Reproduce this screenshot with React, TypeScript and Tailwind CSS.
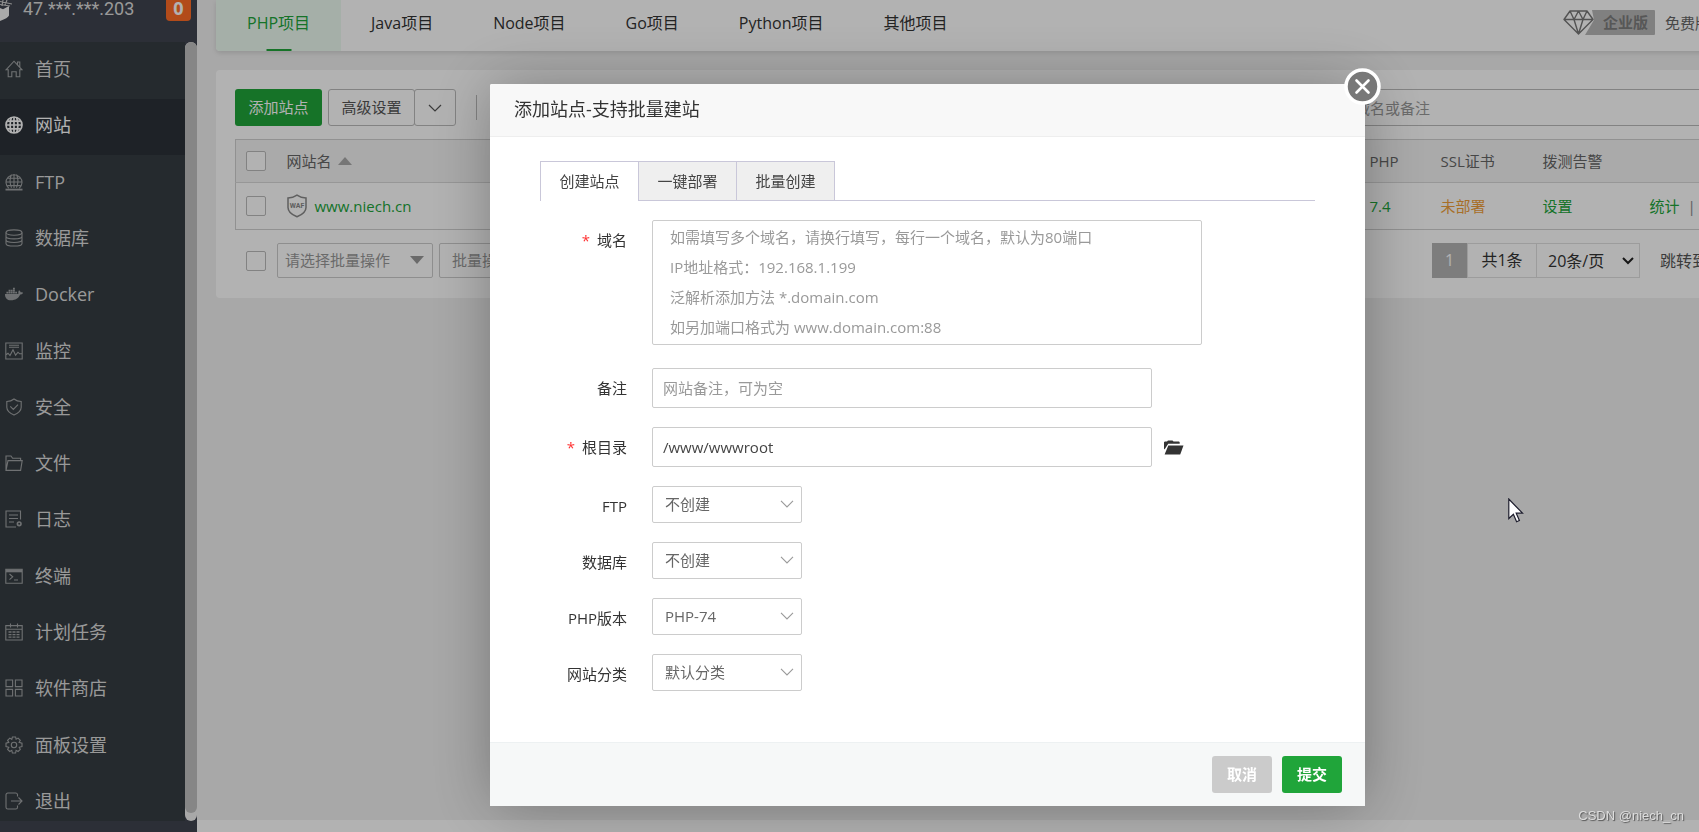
import React, { useState } from 'react'
import { FaDocker } from 'react-icons/fa'

const svgProps = {
  viewBox: '0 0 18 18',
  fill: 'none',
  stroke: 'currentColor',
  strokeWidth: 1.1,
  className: 'size-[18px] shrink-0',
  'aria-hidden': true,
}

const menuItems: { name: string; icon: React.ReactNode }[] = [
  {
    name: '首页',
    icon: (
      <svg {...svgProps}>
        <path d="M1 9.8 9 1.2l8 8.6h-2.2v7h-3.6v-5H6.8v5H3.2v-7zM12.5 4.8V2h2.3v5.2" />
      </svg>
    ),
  },
  {
    name: '网站',
    icon: (
      <svg {...svgProps} strokeWidth={1.7}>
        <circle cx="9" cy="9" r="8" />
        <path d="M9 1v16M1 9h16M2.3 5.2h13.4M2.3 12.8h13.4M6.4 1.5c-1.6 4.6-1.6 10.4 0 15M11.6 1.5c1.6 4.6 1.6 10.4 0 15" />
      </svg>
    ),
  },
  {
    name: 'FTP',
    icon: (
      <svg {...svgProps}>
        <path d="M3.8 15.2a8 7.6 0 1 1 10.4 0M9 1v14M1 9h16M2.4 5.2h13.2M2.4 12.6h13.2M6.5 1.6c-1.8 4-1.8 9 0 13.2M11.5 1.6c1.8 4 1.8 9 0 13.2" />
        <path d="M.5 16.6h17" strokeWidth="1.8" />
      </svg>
    ),
  },
  {
    name: '数据库',
    icon: (
      <svg {...svgProps}>
        <ellipse cx="9" cy="3.6" rx="8" ry="2.7" />
        <path d="M1 3.6v10.8c0 3.5 16 3.5 16 0V3.6M1 7.2c0 3.5 16 3.5 16 0M1 10.8c0 3.5 16 3.5 16 0" />
      </svg>
    ),
  },
  { name: 'Docker', icon: <FaDocker className="size-[18px] shrink-0" aria-hidden /> },
  {
    name: '监控',
    icon: (
      <svg {...svgProps}>
        <path d="M.8 1h16.4v16H.8zM4 3.2h10M4 5.3h10M1 12.8l2-1.6 2 2.3 3-5.7 2.6 5.4 2.4-3 1.6 1.6H17" />
      </svg>
    ),
  },
  {
    name: '安全',
    icon: (
      <svg {...svgProps}>
        <path d="M9 1c2 1.6 4.3 2.4 7.2 2.5v5.8c0 3.4-3.4 6.1-7.2 7.8-3.8-1.7-7.2-4.4-7.2-7.8V3.5C4.7 3.4 7 2.6 9 1zM5.3 8.4 8.3 11.4 13 6.6" />
      </svg>
    ),
  },
  {
    name: '文件',
    icon: (
      <svg {...svgProps}>
        <path d="M1 16.4V2h5l1.6 2.2h8V6.4M1 16.4 3 6.6h14.2l-1.6 9.8z" />
      </svg>
    ),
  },
  {
    name: '日志',
    icon: (
      <svg {...svgProps}>
        <path d="M11 17H1V1h14.5v8.5M4 5h9M4 8.5h9M4 12h5" />
        <circle cx="14.2" cy="13.8" r="1.8" strokeWidth="1.6" />
      </svg>
    ),
  },
  {
    name: '终端',
    icon: (
      <svg {...svgProps}>
        <path d="M.8 2.2h16.4v14H.8zM4.5 7l3.2 2.8-3.2 2.8M9 13h4" />
        <path d="M1 3.8h16" strokeWidth="3" />
      </svg>
    ),
  },
  {
    name: '计划任务',
    icon: (
      <svg {...svgProps}>
        <path d="M.8 2.6h16.4V17H.8zM.8 6.3h16.4M5.5.6v3.8M12.5.6v3.8" />
        <path d="M3.5 9h11M3.5 11.6h11M3.5 14.2h11" strokeDasharray="3 1" strokeWidth="1.3" />
      </svg>
    ),
  },
  {
    name: '软件商店',
    icon: (
      <svg {...svgProps}>
        <path d="M1 1h6.6v6.6H1zM10.4 1H17v6.6h-6.6zM1 10.4h6.6V17H1zM10.4 10.4H17V17h-6.6z" />
      </svg>
    ),
  },
  {
    name: '面板设置',
    icon: (
      <svg {...svgProps}>
        <path d="M7.4 1h3.2l.5 2.2 2-1.1 2.2 2.2-1.2 2 2.9.8v3.4l-2.8.8 1.1 2-2.2 2.2-2-1.2-.5 2.7H7.4l-.6-2.7-2 1.2-2.2-2.2 1.2-2L1 10.600V7.200l2.800-.8-1.200-2.100 2.200-2.200 2 1.200z" />
        <circle cx="9" cy="9" r="2.7" />
      </svg>
    ),
  },
  {
    name: '退出',
    icon: (
      <svg {...svgProps}>
        <path d="M12.5 4.5V2.8A1.8 1.8 0 0 0 10.7 1H2.8A1.8 1.8 0 0 0 1 2.8v12.4A1.8 1.8 0 0 0 2.8 17h7.9a1.8 1.8 0 0 0 1.8-1.8v-1.7M6 9h11M13.5 5.5 17 9l-3.5 3.5" />
      </svg>
    ),
  },
]

const projectTabs = ['PHP项目', 'Java项目', 'Node项目', 'Go项目', 'Python项目', '其他项目']

const domainHint = [
  '如需填写多个域名，请换行填写，每行一个域名，默认为80端口',
  'IP地址格式：192.168.1.199',
  '泛解析添加方法 *.domain.com',
  '如另加端口格式为 www.domain.com:88',
].join('\n')

function Sidebar() {
  return (
    <aside className="flex w-[197px] shrink-0 flex-col bg-[#40444f]">
      <div className="flex h-[42px] shrink-0 items-start">
        <svg viewBox="0 0 12 22" className="h-[22px] w-3 shrink-0" aria-hidden="true">
          <path d="M0 8 3 9.200 9 6v9.500Q8 18 0 21z" fill="#f4f4f4" />
          <path d="M0 1.500 12 4M0 4.500l10 1.500M3 0 2 6M7 0 5 5" stroke="#ccc" strokeWidth="1.2" fill="none" />
        </svg>
        <span className="ml-[11px] font-[Roboto,sans-serif] text-lg leading-[18px] text-[#dcdcdc]">
          47.***.***.203
        </span>
        <span className="mr-[6px] ml-auto h-[21px] w-[25px] rounded-b bg-[#ff6c26] text-center text-lg leading-4 font-bold text-white">
          0
        </span>
      </div>
      <div className="flex min-h-0 flex-1">
        <nav className="flex-1 overflow-hidden bg-[#363d42]">
          <ul className="grid h-[788px] grid-rows-[repeat(14,1fr)]">
            {menuItems.map((item) => {
              const active = item.name === '网站'
              return (
                <li
                  key={item.name}
                  className={active ? 'mt-px bg-[#2c3238] text-white' : 'mt-px text-[#a0a3a5]'}
                >
                  <a href="#" className="flex h-full items-center gap-3 pb-[3px] pl-[5px]">
                    {item.icon}
                    <span className={active ? 'text-lg text-white' : 'text-lg text-[#dcdcdc]'}>
                      {item.name}
                    </span>
                  </a>
                </li>
              )
            })}
          </ul>
        </nav>
        <div className="w-3 rounded-full bg-[#f1f1f1] pb-2">
          <div className="h-full rounded-full bg-[#c0c0c0]" />
        </div>
      </div>
      <div className="h-[11px] shrink-0" />
    </aside>
  )
}

function Checkbox({ label }: { label: string }) {
  return (
    <input
      type="checkbox"
      aria-label={label}
      className="block size-5 shrink-0 appearance-none rounded-xs border border-[#bbb] bg-white"
    />
  )
}

function ProjectNav() {
  return (
    <nav className="flex h-[51px] shrink-0 items-stretch rounded-b bg-white text-base text-[#333] shadow-[0_2px_5px_rgba(0,0,0,0.12)]">
      {projectTabs.map((tab, i) =>
        i === 0 ? (
          <button
            key={tab}
            className="relative rounded-bl bg-[#edfbf1] px-[31px] pb-[6px] text-[#20a53a]"
          >
            {tab}
            <span className="absolute bottom-0 left-1/2 h-[2px] w-[25px] -translate-x-1/2 bg-[#20a53a]" />
          </button>
        ) : (
          <button key={tab} className="px-[30px] pb-[6px]">
            {tab}
          </button>
        )
      )}
      <div className="mr-[29px] ml-auto flex items-start pt-[10px] text-[15px]">
        <svg viewBox="0 0 94 26" className="h-[26px] w-[94px]" aria-hidden="true">
          <path d="M29 0h62a1 1 0 0 1 1 1v23a1 1 0 0 1-1 1H22l9-15z" fill="#b8b8b8" />
          <path
            d="M7 1h17l6 8.5L15.5 24 1 9.5zM1 9.5h29M7 1l4 8.5L15.5 24 20 9.5 24 1M11 9.5 15.5 1 20 9.5"
            fill="none"
            stroke="#777"
            strokeWidth="1.4"
            strokeLinejoin="round"
          />
        </svg>
        <span className="-ml-[54px] w-[54px] leading-[25px] font-bold text-[#7d7d7d]">企业版</span>
        <span className="ml-2 leading-[26px] text-[#666]">免费版</span>
      </div>
    </nav>
  )
}

function SitePanel() {
  return (
    <section className="mt-[19px] rounded bg-white px-[19px] pt-[19px] pb-5 text-[15px] text-[#666]">
      <div className="flex items-center">
        <button className="h-[37px] w-[87px] rounded-[3px] bg-[#20a53a] text-white">添加站点</button>
        <button className="ml-[6px] h-[37px] w-[87px] rounded-[3px] border border-[#bbb] text-[#555]">
          高级设置
        </button>
        <button
          aria-label="更多"
          className="-ml-px flex h-[37px] w-[42px] items-center justify-center rounded-[3px] border border-[#bbb]"
        >
          <svg viewBox="0 0 14 8" className="h-2 w-3.5" fill="none" stroke="#555" aria-hidden="true">
            <path d="m1 1 6 6 6-6" strokeWidth="1.2" />
          </svg>
        </button>
        <span className="ml-5 h-[25px] w-px bg-[#bbb]" />
        <input
          type="text"
          aria-label="搜索"
          placeholder="请输入域名或备注"
          className="ml-auto h-[37px] w-[421px] rounded-[3px] border border-[#bbb] px-[10px] placeholder:text-[#999]"
        />
      </div>

      <table className="mt-[13px] w-full table-fixed border-collapse border border-[#d0d0d0] text-left">
        <thead>
          <tr className="h-[43px] border-b border-[#d8d8d8] bg-[#f4f4f4] *:font-normal">
            <th className="w-[51px] pl-[10px]">
              <Checkbox label="全选" />
            </th>
            <th>
              <span className="flex items-center gap-[6px]">
                网站名
                <svg viewBox="0 0 14 8" className="h-2 w-3.5" fill="#aaa" aria-hidden="true">
                  <path d="M0 8 7 0l7 8z" />
                </svg>
              </span>
            </th>
            <th className="w-[71px] pl-[10px]">PHP</th>
            <th className="w-[102px] pl-[10px]">SSL证书</th>
            <th className="w-[107px] pl-[10px]">拨测告警</th>
            <th className="w-20 pl-[10px]" />
          </tr>
        </thead>
        <tbody>
          <tr className="h-[47px] text-[#20a53a]">
            <td className="pl-[10px]">
              <Checkbox label="选择 www.niech.cn" />
            </td>
            <td>
              <span className="flex items-center gap-2">
                <svg viewBox="0 0 20 24" className="h-6 w-5" aria-hidden="true">
                  <path
                    d="M10 1.2c2.5 1.8 5.5 2.7 9 2.8v9.5c0 4.5-4.5 7.5-9 9.3-4.5-1.8-9-4.8-9-9.3V4c3.5-.1 6.5-1 9-2.8z"
                    fill="none"
                    stroke="#888"
                    strokeWidth="1.5"
                  />
                  <text
                    x="10"
                    y="13.5"
                    textAnchor="middle"
                    fontSize="7"
                    fontWeight="700"
                    fontFamily="Roboto, sans-serif"
                    fill="#888"
                  >
                    WAF
                  </text>
                </svg>
                <a href="#">www.niech.cn</a>
              </span>
            </td>
            <td className="pl-[10px]">
              <a href="#">7.4</a>
            </td>
            <td className="pl-[10px]">
              <a href="#" className="text-[#f0a03a]">
                未部署
              </a>
            </td>
            <td className="pl-[10px]">
              <a href="#">设置</a>
            </td>
            <td className="pl-[10px] whitespace-nowrap">
              <a href="#">统计</a>
              <span className="ml-2 text-[#888]">|</span>
            </td>
          </tr>
        </tbody>
      </table>

      <div className="mt-[13px] flex h-[35px] items-center pl-[11px]">
        <Checkbox label="选择全部站点" />
        <div className="relative ml-[11px]">
          <select
            aria-label="批量操作"
            className="h-[35px] w-[156px] appearance-none rounded-xs border border-[#ccc] bg-white px-[7px] text-[#999]"
          >
            <option>请选择批量操作</option>
          </select>
          <svg
            viewBox="0 0 14 8"
            className="pointer-events-none absolute top-[13px] right-[9px] h-2 w-3.5"
            fill="#999"
            aria-hidden="true"
          >
            <path d="M0 0h14L7 8z" />
          </svg>
        </div>
        <button className="ml-[6px] h-[35px] rounded-xs border border-[#ccc] px-3 text-[#999]">
          批量操作
        </button>
        <div className="ml-auto flex w-[288px] items-center text-base whitespace-nowrap text-[#333]">
          <span className="w-[35px] bg-[#b4b4b4] text-center leading-[35px] text-white">1</span>
          <span className="w-[70px] border border-[#e0e0e0] text-center leading-[33px]">共1条</span>
          <div className="relative -ml-px">
            <select
              aria-label="每页条数"
              className="h-[35px] w-[104px] appearance-none border border-[#e0e0e0] bg-white pl-[11px] text-base"
            >
              <option>20条/页</option>
            </select>
            <svg
              viewBox="0 0 12 8"
              className="pointer-events-none absolute top-[14px] right-[6px] h-2 w-3"
              fill="none"
              stroke="#222"
              aria-hidden="true"
            >
              <path d="m1 1 5 5 5-5" strokeWidth="2" />
            </svg>
          </div>
          <span className="ml-5 text-[#555]">跳转到</span>
        </div>
      </div>
    </section>
  )
}

function FormRow({
  id,
  label,
  required,
  children,
}: {
  id: string
  label: string
  required?: boolean
  children: React.ReactNode
}) {
  return (
    <div className="flex items-start">
      <label htmlFor={id} className="w-[137px] shrink-0 text-right leading-10 text-[#333]">
        {required && <span className="mr-[7px] text-[#f33]">*</span>}
        {label}
      </label>
      <div className="ml-[25px] flex min-w-0 items-center">{children}</div>
    </div>
  )
}

function SelectField({ id, value }: { id: string; value: string }) {
  return (
    <div className="relative">
      <select
        id={id}
        className="block h-[37px] w-[150px] appearance-none rounded-xs border border-[#ccc] bg-white pl-3 text-[#666]"
      >
        <option>{value}</option>
      </select>
      <svg
        viewBox="0 0 14 8"
        className="pointer-events-none absolute top-[14px] right-2 h-2 w-3.5"
        fill="none"
        stroke="#999"
        aria-hidden="true"
      >
        <path d="m1 .8 6 6.2 6-6.2" strokeWidth="1.1" />
      </svg>
    </div>
  )
}

function AddSiteDialog() {
  const [tab, setTab] = useState('创建站点')
  const [root, setRoot] = useState('/www/wwwroot')

  return (
    <div
      role="dialog"
      aria-label="添加站点"
      className="relative w-[875px] rounded-xs bg-white text-[15px] shadow-[1px_1px_62px_rgba(0,0,0,0.3)]"
    >
      <h2 className="h-[53px] rounded-t-xs border-b border-[#eee] bg-[#f8f8f8] pl-6 text-lg leading-[51px] text-[#333]">
        添加站点-支持批量建站
      </h2>
      <button aria-label="关闭" className="absolute -top-4 -right-4 size-[37px]">
        <svg viewBox="0 0 37 37" fill="none" stroke="#fff" aria-hidden="true">
          <circle cx="18.5" cy="18.5" r="16.5" fill="#787878" strokeWidth="3.5" />
          <path d="m12.500 12.500 12 12m0-12-12 12" strokeWidth="2.6" strokeLinecap="round" />
        </svg>
      </button>

      <div className="px-[50px] pt-6 pb-12">
        <div className="flex h-10 border-b border-[#c9c7d9]">
          {['创建站点', '一键部署', '批量创建'].map((name) => (
            <button
              key={name}
              onClick={() => setTab(name)}
              className={
                name === tab
                  ? '-mr-px h-10 w-[99px] border border-b-0 border-[#c9c7d9] bg-white text-[#444]'
                  : '-mr-px h-[39px] w-[99px] border border-b-0 border-[#c9c7d9] bg-[#efefef] pt-px text-[#444]'
              }
            >
              {name}
            </button>
          ))}
        </div>

        <form className="-ml-[50px] pt-[19px]">
          <FormRow id="domain" label="域名" required>
            <textarea
              id="domain"
              placeholder={domainHint}
              className="block h-[125px] w-[550px] resize-none overflow-hidden rounded-xs border border-[#ccc] px-[17px] py-px leading-[30px] placeholder:text-[#999]"
            />
          </FormRow>
          <div className="mt-[23px]">
            <FormRow id="remark" label="备注">
              <input
                id="remark"
                type="text"
                placeholder="网站备注，可为空"
                className="h-10 w-[500px] rounded-xs border border-[#ccc] px-[10px] placeholder:text-[#999]"
              />
            </FormRow>
          </div>
          <div className="mt-[19px]">
            <FormRow id="root" label="根目录" required>
              <input
                id="root"
                type="text"
                value={root}
                onChange={(e) => setRoot(e.target.value)}
                className="h-10 w-[500px] rounded-xs border border-[#ccc] px-[10px] text-[#444]"
              />
              <button type="button" aria-label="选择目录" className="ml-3">
                <svg viewBox="0 0 20 15" className="h-[15px] w-5" fill="#333" aria-hidden="true">
                  <path d="M0 9.5V2.2L.8 1.4H3L4 .4h4.500l1 1H15l.7.800v1.600H4.200L1.200 8.500z" />
                  <path d="M4.3 5.6H19.5L16.2 14.4H.6z" />
                </svg>
              </button>
            </FormRow>
          </div>
          <div className="mt-[19px] space-y-4">
            <FormRow id="ftp" label="FTP">
              <SelectField id="ftp" value="不创建" />
            </FormRow>
            <FormRow id="db" label="数据库">
              <SelectField id="db" value="不创建" />
            </FormRow>
            <FormRow id="php" label="PHP版本">
              <SelectField id="php" value="PHP-74" />
            </FormRow>
            <FormRow id="category" label="网站分类">
              <SelectField id="category" value="默认分类" />
            </FormRow>
          </div>
        </form>
      </div>

      <div className="flex h-16 items-center justify-end gap-[10px] border-t border-[#edf1f2] bg-[#f6f8f8] pr-[23px]">
        <button className="h-[37px] w-[60px] rounded-[3px] bg-[#cbcbcb] font-bold text-white">取消</button>
        <button className="h-[37px] w-[60px] rounded-[3px] bg-[#20a53a] font-bold text-white">提交</button>
      </div>
    </div>
  )
}

export default function App() {
  return (
    <div className="flex h-screen overflow-hidden bg-[#f1f1f1] font-['Open_Sans','Noto_Sans_CJK_SC',sans-serif]">
      <Sidebar />
      <main className="flex min-w-0 flex-1 flex-col overflow-hidden">
        {/* the panel is wider than the viewport and gets clipped on the right */}
        <div className="-mr-10 flex-1 pl-[19px]">
          <ProjectNav />
          <SitePanel />
        </div>
        <footer className="h-3 shrink-0 bg-white" />
      </main>

      <div className="fixed inset-0 flex items-start justify-center bg-black/30 pt-[84px] pl-[156px]">
        <AddSiteDialog />
      </div>

      <svg
        viewBox="0 0 16 25"
        className="pointer-events-none fixed top-[498px] left-[1508px] h-[25px] w-4"
        aria-hidden="true"
      >
        <path
          d="M.8 1v19.500l4.600-4.300 3.200 7.500 2.800-1.200-3.200-7.300h6.300z"
          fill="#fff"
          stroke="#1c1c2c"
          strokeWidth="1.2"
        />
      </svg>
      <span className="pointer-events-none fixed right-[15px] bottom-[6px] font-['Liberation_Sans',sans-serif] text-[13px] leading-5 text-[#ddd] [text-shadow:1px_1px_1px_#555]">
        CSDN @niech_cn
      </span>
    </div>
  )
}
